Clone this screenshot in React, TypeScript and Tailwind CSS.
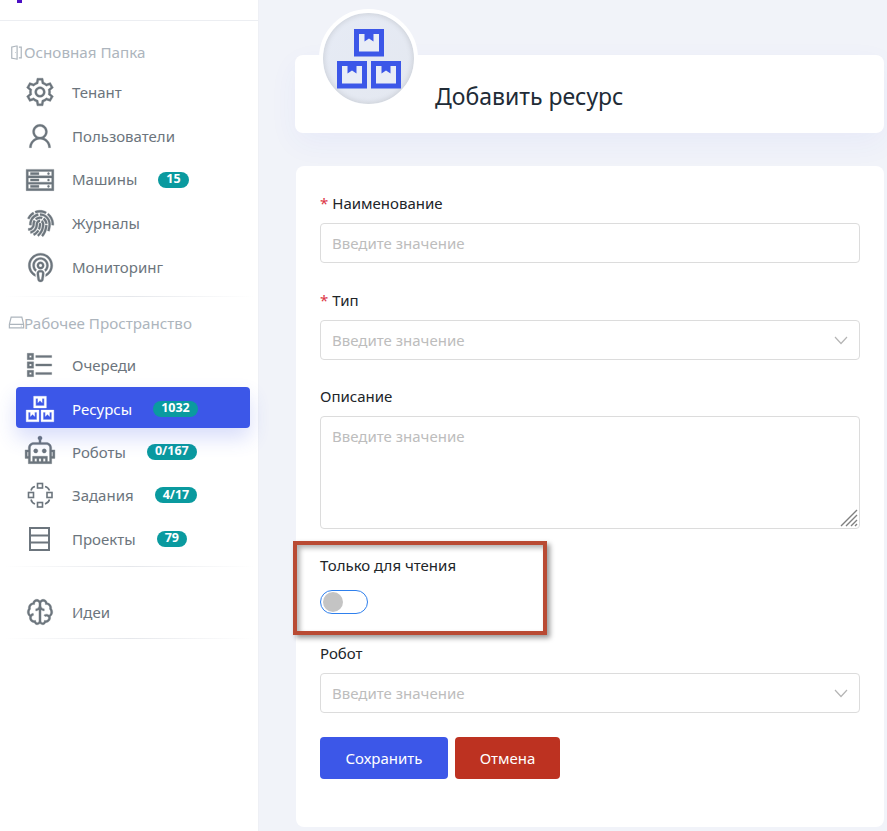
import { ReactNode } from "react";
import {
  LiaCogSolid,
  LiaUser,
  LiaServerSolid,
  LiaFingerprintSolid,
  LiaPodcastSolid,
  LiaListSolid,
  LiaBoxesSolid,
  LiaRobotSolid,
  LiaBrainSolid,
  LiaDoorOpenSolid,
  LiaHddSolid,
} from "react-icons/lia";

function RowsIcon() {
  return (
    <svg className="stroke-2!" width="34" height="34" viewBox="0 0 34 34" fill="none" stroke="currentColor">
      <rect x="7" y="6" width="19" height="22" />
      <path d="M7 13.5h19M7 20.5h19" />
    </svg>
  );
}

function TasksIcon() {
  return (
    <svg className="stroke-[1.6]!" width="34" height="34" viewBox="0 0 34 34" fill="none" stroke="currentColor">
      <rect x="14.5" y="5.5" width="5" height="4.5" />
      <rect x="14.5" y="24.500" width="5" height="4.5" />
      <rect x="5.5" y="14.5" width="5" height="5" />
      <rect x="24" y="14.5" width="5" height="5" />
      <path d="M12 8.500C9.500 9 8.500 10 8 12.500M22 8.500C24.500 9 25.500 10 26.500 12.500M8 21.500C8.500 24 9.500 25 12 26M26.500 21.500C26 24 24.500 25 22 26" />
    </svg>
  );
}

function Box({ x, y }: { x: number; y: number }) {
  return (
    <g transform={`translate(${x} ${y})`}>
      <rect width="30" height="27.500" fill="#3c57e8" />
      <path d="M5 5H10.500V12.500L15 9.500L19.500 12.500V5H25V22.500H5Z" fill="#e9edf6" />
    </g>
  );
}

function NavItem({ icon, label, badge, active }: { icon: ReactNode; label: string; badge?: string; active?: boolean }) {
  return (
    <div
      className={
        active
          ? "ml-4 mr-[8px] h-[41px] px-[10px] pt-[3px] -translate-y-px flex items-center rounded bg-[#3c57e8] text-white shadow-[0_10px_20px_rgba(60,87,232,0.2)]"
          : "ml-4 mr-[8px] h-[41px] px-[10px] flex items-center rounded text-[#6c757d]"
      }
    >
      <span className="w-[49px] -ml-[3px] shrink-0 flex items-center text-[34px] [&_svg]:stroke-[0.3]">{icon}</span>
      <span className="text-[15px]">{label}</span>
      {badge && (
        <span className="ml-[21px] h-[16px] px-2 flex items-center rounded-full bg-[#0a9a9f] text-white text-[12.500px] font-bold">
          {badge}
        </span>
      )}
    </div>
  );
}

function Divider() {
  return <div className="h-px mx-1 bg-gradient-to-r from-transparent via-gray-200 to-transparent" />;
}

function Section({ icon, title }: { icon: ReactNode; title: string }) {
  return (
    <div className="flex items-center pl-[7px] text-[15.200px] text-[#adb5bd]">
      <span className="w-[17px] text-[19px]">{icon}</span>
      {title}
    </div>
  );
}

function Label({ text, required }: { text: string; required?: boolean }) {
  return (
    <div className="h-5 flex items-center text-[15px] text-[#212529]">
      {required && <span className="text-[#dc3545] mr-[4px]">*</span>}
      {text}
    </div>
  );
}

function Field({ select }: { select?: boolean }) {
  return (
    <div className="h-10 mt-[10px] px-[11px] flex items-center justify-between rounded border border-[#dcdcdc] bg-white text-[15px] text-[#bdbdbd]">
      Введите значение
      {select && (
        <svg width="14" height="9" viewBox="0 0 14 9" fill="none" stroke="#b5b5b5" strokeWidth="1.200">
          <path d="M1 1l6 6.500L13 1" />
        </svg>
      )}
    </div>
  );
}

export default function App() {
  return (
    <div className="h-[831px] flex overflow-hidden bg-[#f1f3f9]" style={{ fontFamily: '"Noto Sans", sans-serif' }}>
      {/* Меню */}
      <aside className="w-[259px] shrink-0 bg-white border-r border-[#eef0f5]">
        <div className="h-[21px] border-b border-[#eceef2] pl-[17px]">
          <div className="w-[5px] h-[3px] bg-[#4b0fc4]" />
        </div>
        <div className="pt-[20px]">
          <Section icon={<LiaDoorOpenSolid />} title="Основная Папка" />
          <div className="mt-[8px] flex flex-col gap-[2.700px]">
            <NavItem icon={<LiaCogSolid />} label="Тенант" />
            <NavItem icon={<LiaUser />} label="Пользователи" />
            <NavItem icon={<LiaServerSolid />} label="Машины" badge="15" />
            <NavItem icon={<LiaFingerprintSolid />} label="Журналы" />
            <NavItem icon={<LiaPodcastSolid />} label="Мониторинг" />
          </div>
          <div className="mt-[8px]"><Divider /></div>
          <div className="mt-[15px]">
            <Section icon={<LiaHddSolid />} title="Рабочее Пространство" />
          </div>
          <div className="mt-[10px] flex flex-col gap-[2.500px]">
            <NavItem icon={<LiaListSolid />} label="Очереди" />
            <NavItem icon={<LiaBoxesSolid />} label="Ресурсы" badge="1032" active />
            <NavItem icon={<LiaRobotSolid />} label="Роботы" badge="0/167" />
            <NavItem icon={<TasksIcon />} label="Задания" badge="4/17" />
            <NavItem icon={<RowsIcon />} label="Проекты" badge="79" />
          </div>
          <div className="mt-[7px]"><Divider /></div>
          <div className="mt-[24px]">
            <NavItem icon={<LiaBrainSolid />} label="Идеи" />
          </div>
          <div className="mt-[6px]"><Divider /></div>
        </div>
      </aside>

      {/* Контент */}
      <main className="flex-1 min-w-0 pl-[36px] pr-[3px] pt-[55px]">
        <div className="relative h-[78px] bg-white rounded-lg shadow-[0_10px_30px_rgba(60,87,232,0.05)] pl-[140px] flex items-center">
          <div className="absolute left-[24px] top-[-46px] w-[99px] h-[99px] rounded-full border-4 border-white bg-gradient-to-br from-[#e6ebf5] to-[#e4e8f0] shadow-[inset_0_0_6px_rgba(0,0,0,0.15)] flex items-center justify-center">
            <svg width="64" height="60" viewBox="0 0 64 60">
              <Box x={17} y={0} />
              <Box x={0} y={32} />
              <Box x={34} y={32} />
            </svg>
          </div>
          <h1 className="text-[23px] text-[#212b36] mt-[4px]">Добавить ресурс</h1>
        </div>

        <div className="relative mt-[33px] ml-px h-[661px] bg-white rounded-lg px-[24px] pt-[27px]">
          <Label text="Наименование" required />
          <Field />
          <div className="mt-[27px]">
            <Label text="Тип" required />
            <Field select />
          </div>
          <div className="mt-[26px]">
            <Label text="Описание" />
            <div className="relative h-[113px] mt-[10px] px-[11px] pt-[8px] rounded border border-[#dcdcdc] text-[15px] text-[#bdbdbd]">
              Введите значение
              <svg className="absolute right-[1px] bottom-[1px]" width="18" height="18" viewBox="0 0 18 18" stroke="#808080" strokeWidth="1.400">
                <path d="M1 17L17 1M6 17L17 6M11 17L17 11M15 17l2-2" />
              </svg>
            </div>
          </div>
          <div className="mt-[26px]">
            <Label text="Только для чтения" />
            <div className="w-12 h-6 mt-[15px] rounded-full border border-[#2f80ed] bg-white flex items-center pl-[2px]">
              <div className="w-5 h-5 rounded-full bg-[#c4c4c4]" />
            </div>
          </div>
          <div className="mt-[29px]">
            <Label text="Робот" />
            <Field select />
          </div>
          <div className="mt-[24px] flex gap-[7px]">
            <button className="w-[128px] h-[42px] rounded bg-[#3c57e8] text-white text-[15px]">Сохранить</button>
            <button className="w-[105px] h-[42px] rounded bg-[#bd3221] text-white text-[15px]">Отмена</button>
          </div>
        </div>
      </main>

      {/* Рамка-пометка поверх скриншота */}
      <div className="absolute left-[293px] top-[541px] w-[254px] h-[94px] border-4 border-[#b94a33] shadow-[3px_3px_5px_rgba(0,0,0,0.4),inset_3px_3px_5px_rgba(0,0,0,0.3)]" />
    </div>
  );
}
